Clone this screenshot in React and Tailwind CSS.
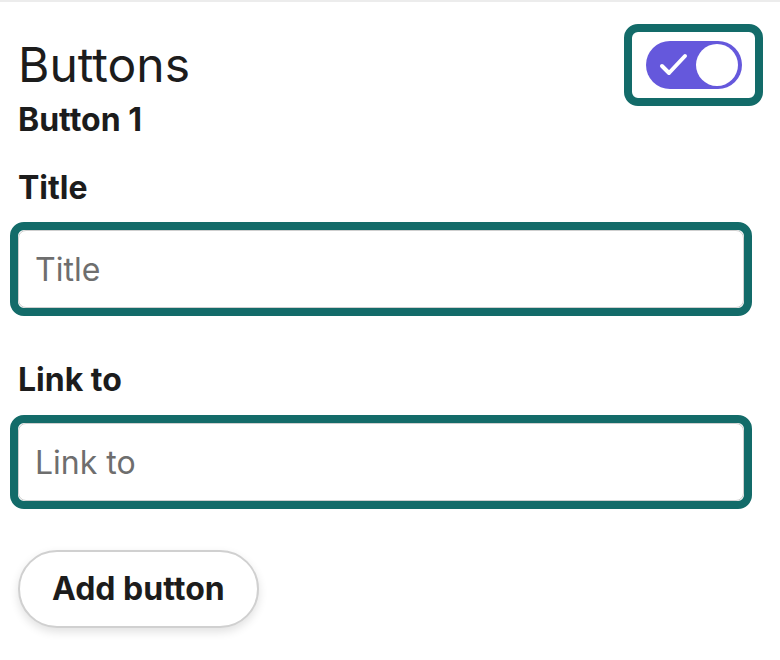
import React, { useState } from 'react';

const font = { fontFamily: 'Inter, "Noto Sans", sans-serif' };

// Toggle switch wrapped in a focus ring
const Toggle = ({ on, onChange }) => (
	<div className="w-[139px] h-[82px] rounded-[14px] border-[8px] border-[#136b69] bg-white flex items-center justify-center">
		<button
			onClick={() => onChange(!on)}
			className="relative w-[96px] h-[48px] rounded-full bg-[#6558dc] flex items-center"
		>
			<svg width="96" height="48" viewBox="0 0 96 48" className="absolute left-0 top-0">
				<path d="M16 25 L23 32 L39 15" fill="none" stroke="white" strokeWidth="4" strokeLinecap="round" strokeLinejoin="round" />
			</svg>
			<span className="absolute right-[4px] top-[3px] w-[42px] h-[42px] rounded-full bg-white" />
		</button>
	</div>
);

const Field = ({ label, placeholder, labelGap, className }) => (
	<div className={className}>
		<label className="block text-[32px] leading-[36px] font-bold text-[#1c1c1c] pl-[18px]">{label}</label>
		<div className={`ml-[10px] mr-[28px] rounded-[14px] border-[8px] border-[#136b69] ${labelGap}`}>
			<input
				placeholder={placeholder}
				className="w-full h-[78px] rounded-[8px] border-[1.5px] border-[#cfcfcf] bg-white px-[16px] text-[32px] text-[#1c1c1c] placeholder:text-[#6e6e6e] outline-none"
				style={font}
			/>
		</div>
	</div>
);

export default function App() {
	const [enabled, setEnabled] = useState(true);

	return (
		<div className="min-h-[660px] bg-white border-t-[2px] border-[#ececec]" style={font}>
			{/* Header */}
			<div className="flex justify-between items-start pt-[22px] pl-[18px] pr-[17px]">
				<div className="pt-[16.5px]">
					<h1 className="text-[48px] leading-[48px] font-normal text-[#1c1c1c]">Buttons</h1>
					<h2 className="mt-[13px] text-[32px] leading-[36px] font-bold text-[#1c1c1c]">Button 1</h2>
				</div>
				<Toggle on={enabled} onChange={setEnabled} />
			</div>

			<Field label="Title" placeholder="Title" labelGap="mt-[16px]" className="mt-[32.5px]" />
			<Field label="Link to" placeholder="Link to" labelGap="mt-[17.5px]" className="mt-[45.5px]" />

			<div className="pl-[18px] mt-[41px]">
				<button className="h-[78px] px-[32px] rounded-full border-[2px] border-[#d0d0d0] bg-white shadow-[0_4px_10px_rgba(0,0,0,0.12)] text-[32px] font-bold text-[#1c1c1c]">
					Add button
				</button>
			</div>
		</div>
	);
}
